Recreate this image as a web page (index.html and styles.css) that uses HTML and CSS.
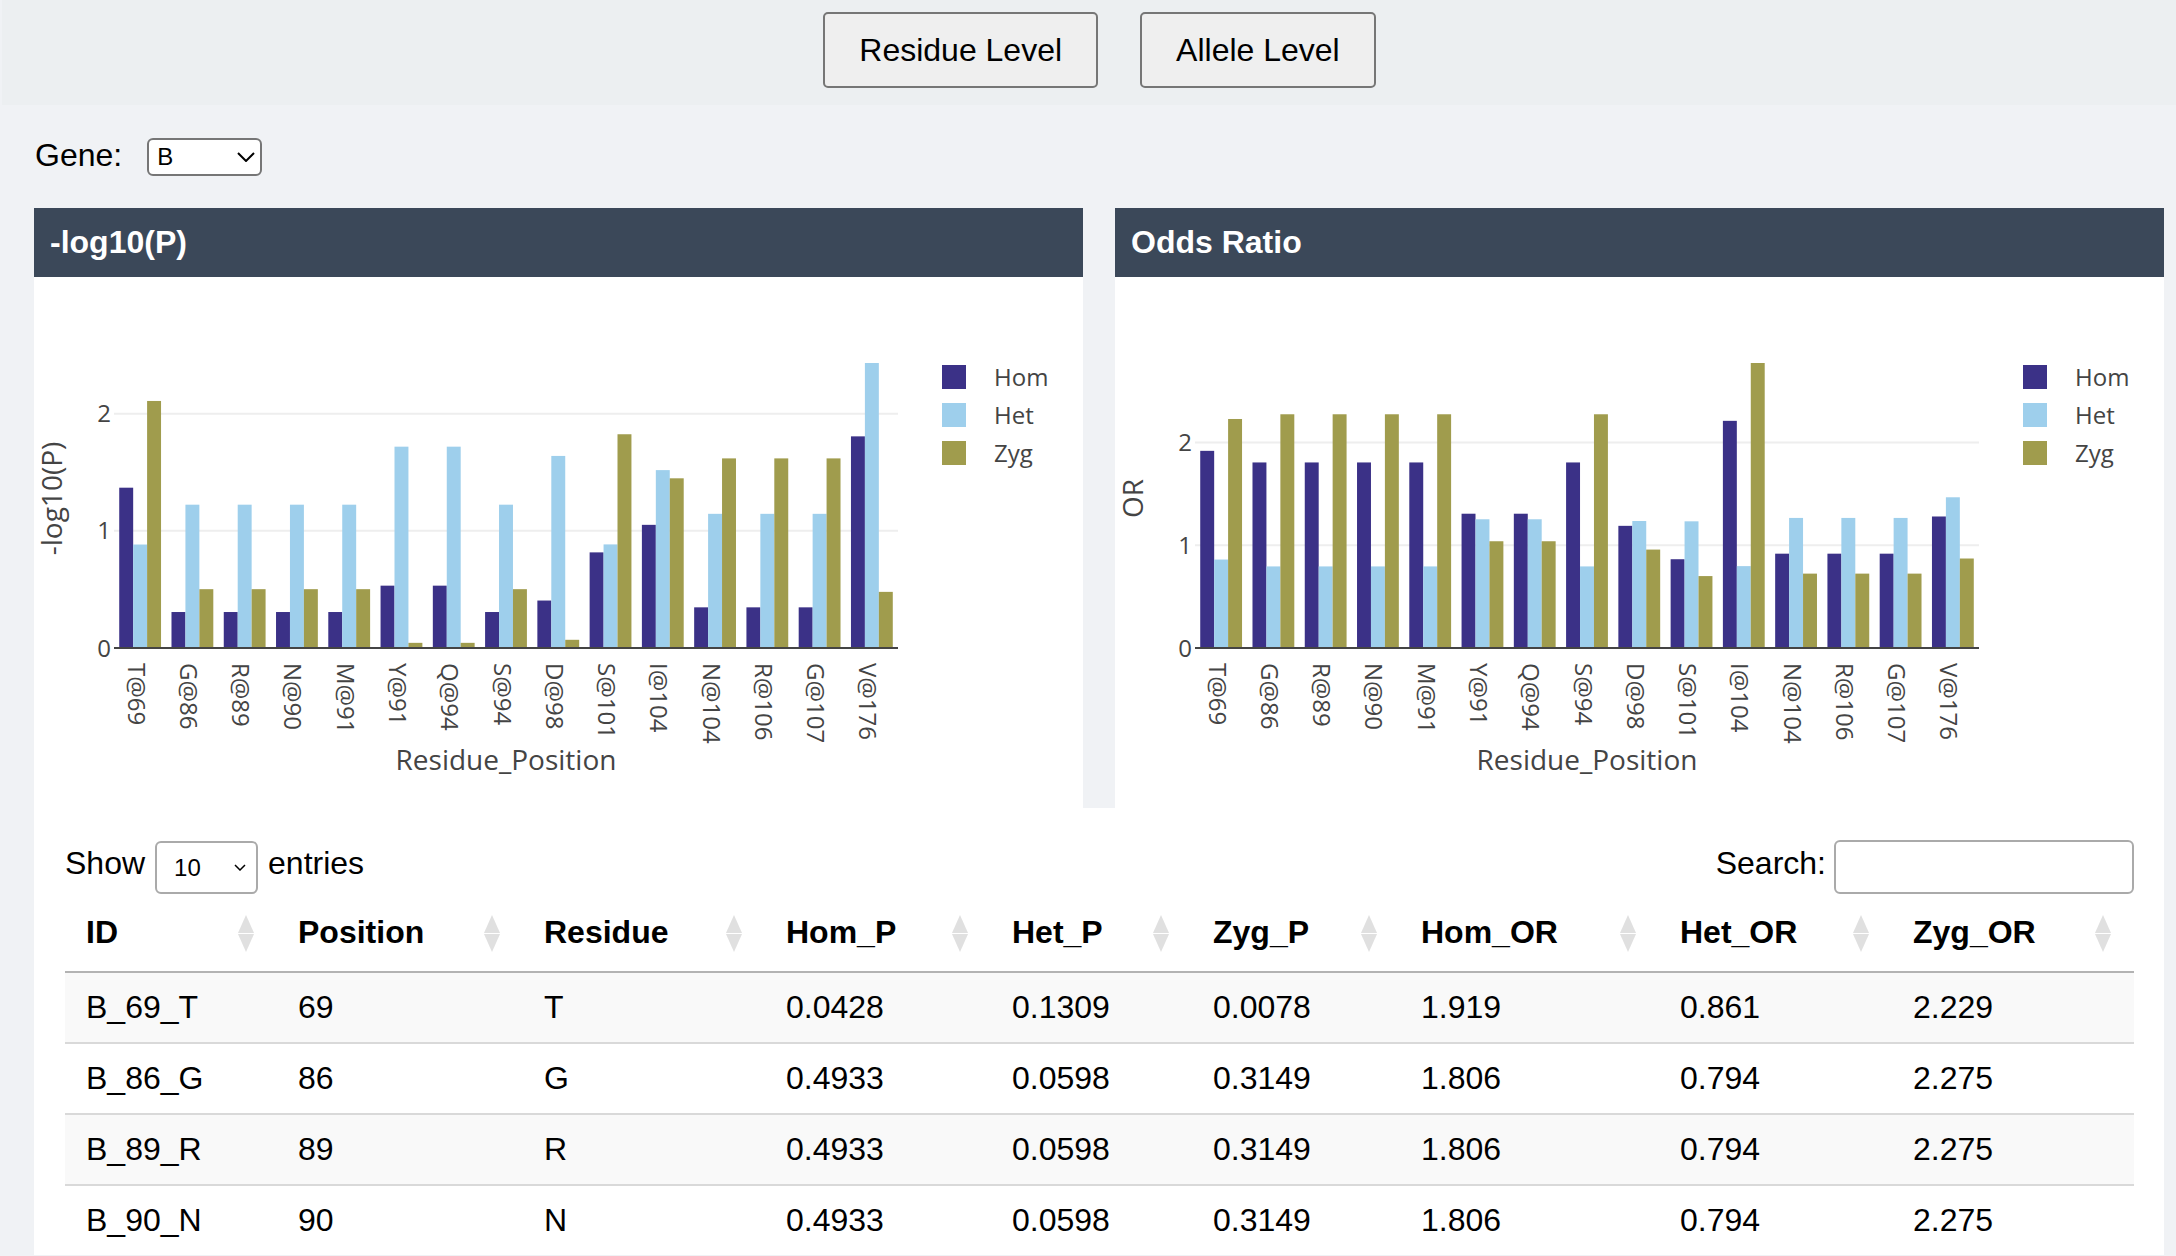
FILE: index.html
```html
<!DOCTYPE html>
<html lang="en">
<head>
<meta charset="utf-8">
<title>Residue Level</title>
<link rel="stylesheet" href="styles.css">
</head>
<body>
<nav class="topbar">
  <button class="level-btn" type="button">Residue Level</button>
  <button class="level-btn" type="button">Allele Level</button>
</nav>
<main class="content">
  <div class="gene-row">
    <label class="gene-label" for="gene">Gene:</label>
    <span class="select-wrap gene-wrap">
      <select id="gene" class="gene-select"><option>B</option></select>
      <svg class="chevron gene-chevron" viewBox="0 0 18 10" width="18" height="10"><polyline points="1,1 9,9 17,1" /></svg>
    </span>
  </div>

  <div class="charts">
    <section class="panel">
      <h2 class="panel-title">-log10(P)</h2>
      <svg class="chart" data-chart="logp" width="1049" height="531" viewBox="0 0 1049 531"></svg>
    </section>
    <section class="panel">
      <h2 class="panel-title">Odds Ratio</h2>
      <svg class="chart" data-chart="or" width="1049" height="531" viewBox="0 0 1049 531"></svg>
    </section>
  </div>

  <section class="table-card">
    <div class="dt-controls">
      <label class="dt-length"><span class="dt-text">Show</span>
        <span class="select-wrap len-wrap">
          <select class="len-select"><option>10</option><option>25</option><option>50</option><option>100</option></select>
          <svg class="chevron len-chevron" viewBox="0 0 12 7" width="12" height="7"><polyline points="1,1 6,6 11,1" /></svg>
        </span>
        <span class="dt-text">entries</span></label>
      <label class="dt-search"><span class="dt-text">Search:</span><input type="search" class="search-input"></label>
    </div>
    <table class="dt">
      <colgroup>
        <col class="w-id"><col class="w-pos"><col class="w-res"><col class="w-homp"><col class="w-hetp"><col class="w-zygp"><col class="w-homor"><col class="w-hetor"><col class="w-zygor">
      </colgroup>
      <thead>
        <tr><th>ID</th><th>Position</th><th>Residue</th><th>Hom_P</th><th>Het_P</th><th>Zyg_P</th><th>Hom_OR</th><th>Het_OR</th><th>Zyg_OR</th></tr>
      </thead>
      <tbody>
        <tr class="odd"><td>B_69_T</td><td>69</td><td>T</td><td>0.0428</td><td>0.1309</td><td>0.0078</td><td>1.919</td><td>0.861</td><td>2.229</td></tr>
        <tr><td>B_86_G</td><td>86</td><td>G</td><td>0.4933</td><td>0.0598</td><td>0.3149</td><td>1.806</td><td>0.794</td><td>2.275</td></tr>
        <tr class="odd"><td>B_89_R</td><td>89</td><td>R</td><td>0.4933</td><td>0.0598</td><td>0.3149</td><td>1.806</td><td>0.794</td><td>2.275</td></tr>
        <tr><td>B_90_N</td><td>90</td><td>N</td><td>0.4933</td><td>0.0598</td><td>0.3149</td><td>1.806</td><td>0.794</td><td>2.275</td></tr>
      </tbody>
    </table>
  </section>
</main>
<script src="script.js"></script>
</body>
</html>
```

FILE: styles.css
```css
* { box-sizing: border-box; }
html, body { margin: 0; }
body {
  background: #f0f2f5;
  font-family: "Liberation Sans", Arial, sans-serif;
  color: #000;
}

/* top bar */
.topbar {
  height: 105px;
  margin-left: 2px;
  background: #eceff1;
  display: flex;
  justify-content: center;
  align-items: flex-start;
  gap: 42px;
  padding: 12px 0 0 21px;
}
.level-btn {
  height: 76px;
  padding: 0 34px;
  font-family: "Liberation Sans", Arial, sans-serif;
  font-size: 32px;
  color: #000;
  background: #efefef;
  border: 2px solid #767676;
  border-radius: 5px;
}

.content { padding: 0 12px 0 34px; }

/* gene row */
.gene-row {
  height: 103px;
  display: flex;
  align-items: center;
}
.gene-label { font-size: 32px; padding-left: 1px; margin-bottom: 2px; }
.select-wrap { position: relative; display: inline-block; }
.gene-wrap { margin-left: 25px; height: 38px; }
.gene-select {
  appearance: none;
  -webkit-appearance: none;
  display: block;
  width: 115px;
  height: 38px;
  border: 2px solid #767676;
  border-radius: 6px;
  background: #fff;
  font-family: "Liberation Sans", Arial, sans-serif;
  font-size: 24px;
  color: #000;
  padding: 0 0 0 8px;
}
.chevron {
  position: absolute;
  pointer-events: none;
  fill: none;
  stroke: #000;
}
.gene-chevron { left: 90px; top: 14px; stroke-width: 2; }

/* chart panels */
.charts {
  display: flex;
  gap: 32px;
}
.panel {
  flex: 1 1 0;
  min-width: 0;
  background: #fff;
}
.panel-title {
  margin: 0;
  height: 69px;
  display: flex;
  align-items: center;
  padding: 0 16px;
  background: #3b4859;
  color: #fff;
  font-size: 32px;
  font-weight: bold;
}
.chart { display: block; }
.chart .grid { stroke: #eeeeee; stroke-width: 2; }
.chart .zero { stroke: #444; stroke-width: 2; }
.chart .tick {
  font-family: "Open Sans", "DejaVu Sans", sans-serif;
  font-size: 24px;
  fill: #444;
}
.chart .axis-title {
  font-family: "Open Sans", "DejaVu Sans", sans-serif;
  font-size: 28px;
  fill: #444;
}
.chart .legend-text {
  font-family: "Open Sans", "DejaVu Sans", sans-serif;
  font-size: 24px;
  fill: #444;
}

/* table card */
.table-card {
  background: #fff;
  padding: 32px 30px 0 31px;
}
.dt-controls {
  height: 54px;
  display: flex;
  justify-content: space-between;
  align-items: center;
  font-size: 32px;
}
.dt-length, .dt-search {
  display: flex;
  align-items: center;
}
.dt-text { margin-bottom: 7px; }
.len-wrap { margin: 0 10px; height: 53px; }
.len-select {
  appearance: none;
  -webkit-appearance: none;
  display: block;
  width: 103px;
  height: 53px;
  border: 2px solid #aaa;
  border-radius: 6px;
  background: #fff;
  font-family: "Liberation Sans", Arial, sans-serif;
  font-size: 24px;
  color: #000;
  padding: 0 0 0 17px;
}
.len-chevron { left: 79px; top: 23px; stroke-width: 1.5; }
.search-input {
  margin-left: 8px;
  width: 300px;
  height: 54px;
  border: 2px solid #aaa;
  border-radius: 6px;
  background: #fff;
  font-size: 24px;
}

.dt {
  width: 100%;
  table-layout: fixed;
  border-collapse: collapse;
  font-size: 32px;
}
.w-id { width: 212px; }
.w-pos { width: 246px; }
.w-res { width: 242px; }
.w-homp { width: 226px; }
.w-hetp { width: 201px; }
.w-zygp { width: 208px; }
.w-homor { width: 259px; }
.w-hetor { width: 233px; }
.w-zygor { width: 242px; }

.dt th {
  position: relative;
  text-align: left;
  font-weight: bold;
  padding: 20px 21px;
  border-bottom: 2px solid #b3b3b3;
}
.dt th::before,
.dt th::after {
  content: "";
  position: absolute;
  right: 23px;
  width: 0;
  height: 0;
  border-left: 8.5px solid transparent;
  border-right: 8.5px solid transparent;
}
.dt th::before { top: 21px; border-bottom: 18px solid #e0e0e0; }
.dt th::after { top: 40px; border-top: 18px solid #e0e0e0; }

.dt td {
  padding: 16px 21px;
  border-top: 2px solid #d9d9d9;
}
.dt tbody tr:first-child td { border-top: none; }
.dt tbody tr.odd td { background: #f9f9f9; }
```

FILE: script.js
```js
(function () {
  var NS = "http://www.w3.org/2000/svg";
  var cats = ["T@69", "G@86", "R@89", "N@90", "M@91", "Y@91", "Q@94", "S@94",
              "D@98", "S@101", "I@104", "N@104", "R@106", "G@107", "V@176"];
  var colors = { Hom: "#3b3187", Het: "#9ecfec", Zyg: "#a09c4d" };
  var charts = {
    logp: {
      title: "-log10(P)",
      max: 2.432,
      series: {
        Hom: [1.368, 0.307, 0.307, 0.307, 0.307, 0.532, 0.532, 0.307, 0.405, 0.816, 1.051, 0.347, 0.347, 0.347, 1.806],
        Het: [0.883, 1.223, 1.223, 1.223, 1.223, 1.718, 1.718, 1.223, 1.639, 0.884, 1.518, 1.145, 1.145, 1.145, 2.432],
        Zyg: [2.108, 0.502, 0.502, 0.502, 0.502, 0.044, 0.044, 0.502, 0.070, 1.824, 1.448, 1.618, 1.618, 1.618, 0.479]
      }
    },
    or: {
      title: "OR",
      max: 2.774,
      series: {
        Hom: [1.919, 1.806, 1.806, 1.806, 1.806, 1.307, 1.307, 1.806, 1.189, 0.864, 2.211, 0.918, 0.918, 0.918, 1.280],
        Het: [0.861, 0.794, 0.794, 0.794, 0.794, 1.253, 1.253, 0.794, 1.236, 1.233, 0.797, 1.266, 1.266, 1.266, 1.467],
        Zyg: [2.229, 2.275, 2.275, 2.275, 2.275, 1.039, 1.039, 2.275, 0.958, 0.700, 2.774, 0.724, 0.724, 0.724, 0.871]
      }
    }
  };

  function add(parent, tag, attrs, text) {
    var node = document.createElementNS(NS, tag);
    for (var k in attrs) node.setAttribute(k, attrs[k]);
    if (text !== undefined) node.textContent = text;
    parent.appendChild(node);
    return node;
  }

  function draw(svg, cfg) {
    var L = 80, R = 864, T = 86, B = 371;
    var step = (R - L) / cats.length;
    var bw = step * 0.8 / 3;
    var k = (B - T) / cfg.max;
    [1, 2].forEach(function (v) {
      add(svg, "line", { x1: L, x2: R, y1: B - v * k, y2: B - v * k, "class": "grid" });
    });
    var names = ["Hom", "Het", "Zyg"];
    names.forEach(function (name, s) {
      cfg.series[name].forEach(function (v, i) {
        add(svg, "rect", {
          x: (L + i * step + step * 0.1 + s * bw).toFixed(2),
          y: (B - v * k).toFixed(2),
          width: bw.toFixed(2),
          height: (v * k).toFixed(2),
          fill: colors[name]
        });
      });
    });
    add(svg, "line", { x1: L, x2: R, y1: B, y2: B, "class": "zero" });
    [0, 1, 2].forEach(function (v) {
      add(svg, "text", { x: 77, y: (B - v * k + 8.5).toFixed(2), "class": "tick", "text-anchor": "end" }, String(v));
    });
    cats.forEach(function (c, i) {
      var cx = L + (i + 0.5) * step;
      add(svg, "text", { transform: "translate(" + (cx - 12.5).toFixed(2) + ",386) rotate(90)", "class": "tick" }, c);
    });
    add(svg, "text", { x: 472, y: 493, "class": "axis-title", "text-anchor": "middle" }, "Residue_Position");
    add(svg, "text", { transform: "translate(28,221.5) rotate(-90)", "class": "axis-title", "text-anchor": "middle" }, cfg.title);
    names.forEach(function (name, s) {
      var c = 100 + s * 38;
      add(svg, "rect", { x: 908, y: c - 12, width: 24, height: 24, fill: colors[name] });
      add(svg, "text", { x: 960, y: c + 8.5, "class": "legend-text" }, name);
    });
  }

  var svgs = document.querySelectorAll("svg.chart");
  for (var i = 0; i < svgs.length; i++) {
    draw(svgs[i], charts[svgs[i].getAttribute("data-chart")]);
  }
})();
```
